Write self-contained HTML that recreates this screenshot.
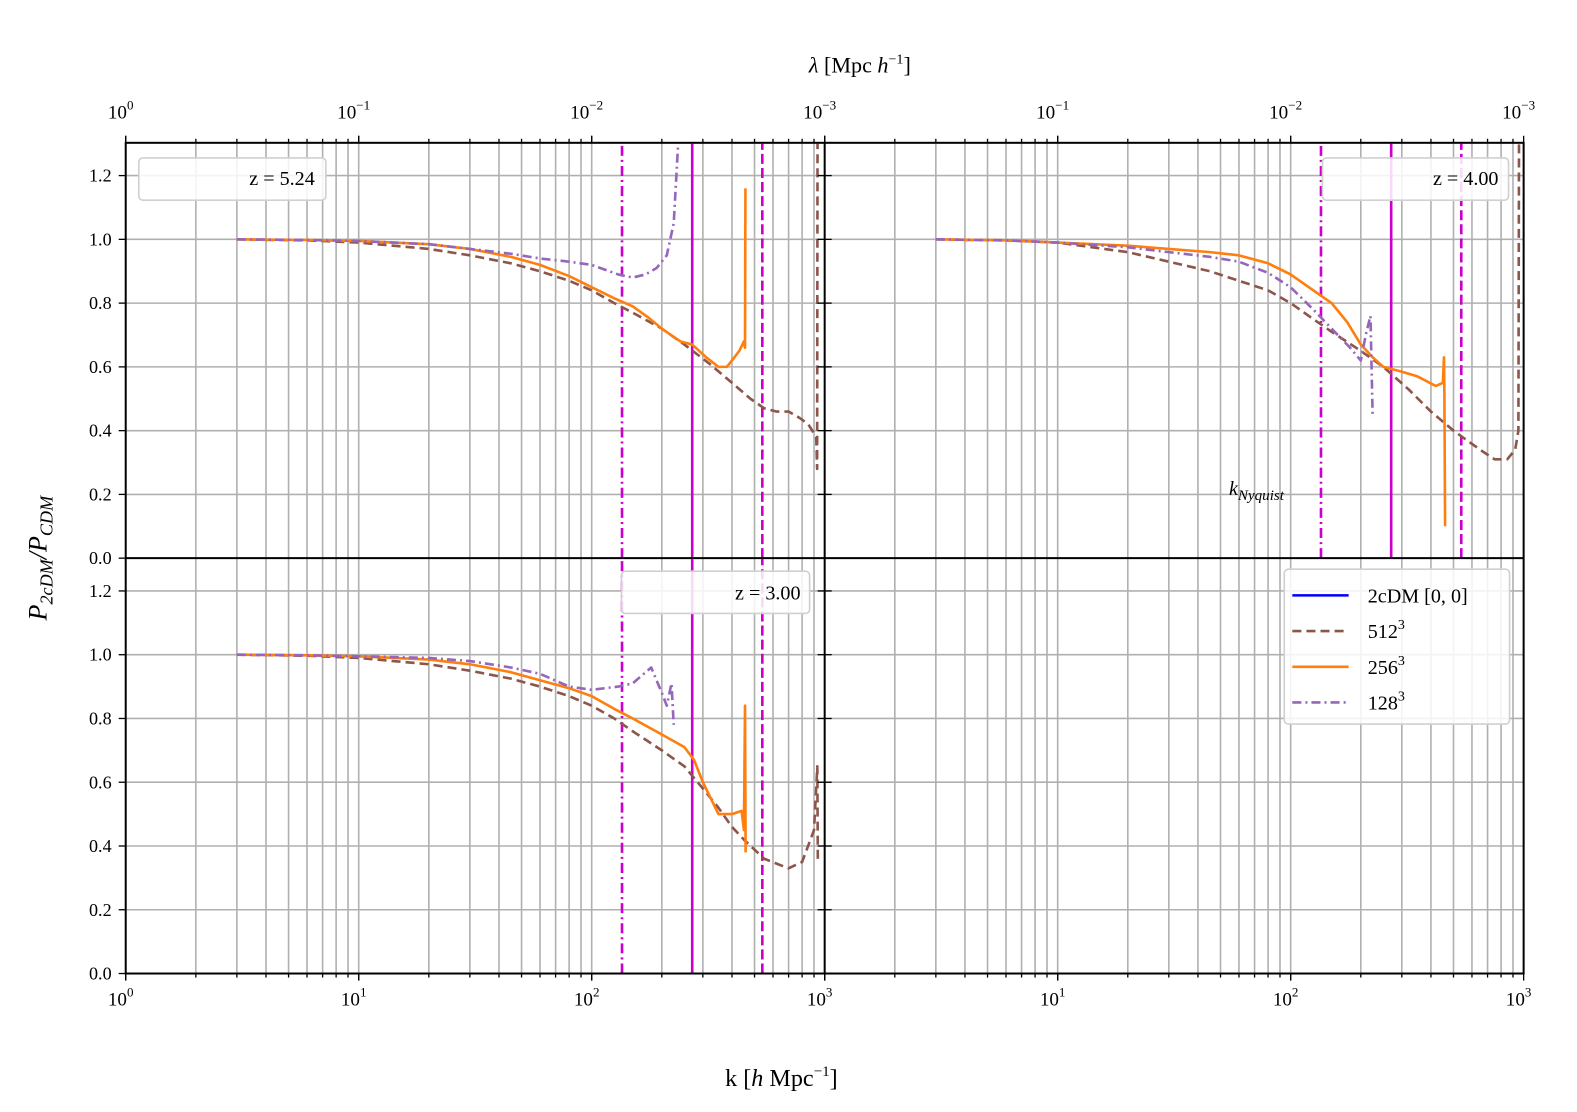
<!DOCTYPE html>
<html><head><meta charset="utf-8"><style>
html,body{margin:0;padding:0;background:#fff;overflow:hidden;width:1577px;height:1112px;}
svg{display:block;}
svg text{font-family:"Liberation Serif",serif;fill:#000;}
</style></head><body>
<svg width="1577" height="1112" xmlns="http://www.w3.org/2000/svg"><g id="s" transform="scale(1.0057)"></g></svg>
<script>
const S=document.getElementById('s');let h='';
const DEC=231.67;
const panels=[{x0:125,y0:142,k:'tl'},{x0:820,y0:142,k:'tr'},{x0:125,y0:555,k:'bl'},{x0:820,y0:555,k:'br'}];
function X(p,k){return p.x0+Math.log10(k)*DEC;}
function Y(p,v){return p.y0+413-v*317;}
panels.forEach(p=>{
 for(let d=0;d<3;d++)for(let m=1;m<10;m++){let x=X(p,m*Math.pow(10,d));if(x<=p.x0+0.5)continue;h+=`<line x1="${x}" y1="${p.y0}" x2="${x}" y2="${p.y0+413}" stroke="#b0b0b0" stroke-width="1.6"/>`;}
 for(let v=0.2;v<1.3;v+=0.2){let y=Y(p,v);h+=`<line x1="${p.x0}" y1="${y}" x2="${p.x0+695}" y2="${y}" stroke="#b0b0b0" stroke-width="1.6"/>`;}
});
function line(p,pts,col,dash,w){let d=pts.map((q,i)=>(i?'L':'M')+X(p,q[0]).toFixed(1)+' '+Y(p,Math.min(q[1],1.3)).toFixed(1)).join(' ');
 h+=`<path d="${d}" fill="none" stroke="${col}" stroke-width="${w||2.6}" stroke-linejoin="round" ${dash?`stroke-dasharray="${dash}"`:''}/>`;}
const BR='#8c564b',OR='#ff7f0e',PU='#9467bd',MG='#cc00cc';
function vlines(p){line(p,[[135,0],[135,1.3]],MG,'10,4,2,4',2.6);line(p,[[270,0],[270,1.3]],MG,null,2.6);line(p,[[540,0],[540,1.3]],MG,'10,4',2.6);}
let P=panels;
vlines(P[0]);vlines(P[1]);vlines(P[2]);
line(P[0],[[3,1],[6,0.997],[10,0.99],[20,0.97],[30,0.95],[45,0.925],[60,0.9],[80,0.87],[100,0.84],[125,0.8],[150,0.77],[200,0.72],[250,0.67],[320,0.61],[400,0.55],[480,0.5],[550,0.47],[620,0.46],[700,0.46],[780,0.44],[850,0.42],[920,0.38],[928,0.28],[932,1.3]],BR,'9,5');
line(P[0],[[3,1],[6,0.998],[10,0.995],[20,0.985],[30,0.97],[45,0.945],[60,0.92],[80,0.885],[100,0.85],[125,0.815],[150,0.79],[175,0.755],[200,0.72],[240,0.68],[270,0.67],[310,0.63],[350,0.6],[380,0.6],[400,0.62],[430,0.65],[450,0.68],[455,0.66],[457,1.16]],OR);
line(P[0],[[3,1],[6,0.998],[10,0.995],[20,0.985],[30,0.97],[45,0.955],[60,0.94],[80,0.93],[100,0.92],[130,0.89],[150,0.88],[170,0.89],[190,0.91],[210,0.95],[225,1.05],[235,1.3]],PU,'9,4,2,4');
line(P[1],[[3,1],[6,0.997],[10,0.99],[20,0.96],[30,0.93],[45,0.9],[60,0.87],[80,0.84],[100,0.8],[125,0.75],[150,0.71],[200,0.65],[250,0.6],[320,0.53],[400,0.46],[500,0.4],[650,0.34],[750,0.31],[850,0.31],[920,0.34],[950,0.4],[955,1.3]],BR,'9,5');
line(P[1],[[3,1],[6,0.997],[10,0.99],[20,0.98],[30,0.97],[45,0.96],[60,0.95],[80,0.925],[100,0.89],[125,0.84],[150,0.8],[175,0.74],[200,0.67],[225,0.63],[250,0.6],[300,0.585],[350,0.57],[420,0.54],[450,0.55],[455,0.63],[457,0.52],[460,0.1]],OR);
line(P[1],[[3,1],[6,0.997],[10,0.99],[20,0.975],[30,0.96],[45,0.945],[60,0.93],[80,0.895],[100,0.85],[125,0.78],[150,0.72],[180,0.66],[200,0.62],[210,0.7],[220,0.76],[225,0.44]],PU,'9,4,2,4');
line(P[2],[[3,1],[6,0.997],[10,0.99],[20,0.97],[30,0.95],[45,0.925],[60,0.9],[80,0.87],[100,0.84],[125,0.8],[150,0.76],[200,0.7],[250,0.65],[300,0.58],[350,0.52],[400,0.46],[450,0.42],[550,0.36],[700,0.33],[800,0.35],[900,0.45],[930,0.65],[935,0.35]],BR,'9,5');
line(P[2],[[3,1],[6,0.998],[10,0.995],[20,0.985],[30,0.97],[45,0.945],[60,0.92],[80,0.895],[100,0.87],[125,0.83],[150,0.8],[200,0.75],[250,0.71],[275,0.67],[300,0.6],[350,0.5],[400,0.5],[440,0.51],[450,0.45],[455,0.84],[458,0.38]],OR);
line(P[2],[[3,1],[6,0.998],[10,0.995],[20,0.99],[30,0.98],[45,0.96],[60,0.94],[80,0.9],[100,0.89],[130,0.9],[150,0.91],[180,0.96],[200,0.88],[210,0.84],[220,0.91],[225,0.78]],PU,'9,4,2,4');
h+=`<rect x="125" y="142" width="1390" height="826" fill="none" stroke="#000" stroke-width="2"/>`;
h+=`<line x1="820" y1="142" x2="820" y2="968" stroke="#000" stroke-width="2"/><line x1="125" y1="555" x2="1515" y2="555" stroke="#000" stroke-width="2"/>`;
[0,1].forEach(c=>{let x0=125+c*695;
 for(let d=0;d<3;d++)for(let m=1;m<10;m++){let x=x0+Math.log10(m*Math.pow(10,d))*DEC;let L=m==1?7:4;
  h+=`<line x1="${x}" y1="968" x2="${x}" y2="${968+L}" stroke="#000" stroke-width="1.3"/><line x1="${x}" y1="142" x2="${x}" y2="${142-L}" stroke="#000" stroke-width="1.3"/>`;}
 for(let d=0;d<=3;d++){let x=x0+d*DEC;
  h+=`<line x1="${x}" y1="968" x2="${x}" y2="975" stroke="#000" stroke-width="1.3"/><line x1="${x}" y1="142" x2="${x}" y2="135" stroke="#000" stroke-width="1.3"/>`;
  if(c==1&&d==0)continue;
  h+=`<text x="${x-5}" y="1000" font-size="19" text-anchor="middle">10<tspan dy="-9" font-size="13">${d}</tspan></text>`;
  h+=`<text x="${x-5}" y="118" font-size="19" text-anchor="middle">10<tspan dy="-9" font-size="13">${d?'−'+d:'0'}</tspan></text>`;}
});
[142,555].forEach(y0=>{for(let i=0;i<=6;i++){let y=y0+413-i*63.4;let v=(i*0.2).toFixed(1);
 h+=`<line x1="118" y1="${y}" x2="125" y2="${y}" stroke="#000" stroke-width="1.3"/><line x1="813" y1="${y}" x2="827" y2="${y}" stroke="#000" stroke-width="1.3"/>`;
 h+=`<text x="111" y="${y+6}" font-size="18" text-anchor="end">${v}</text>`;}});
function box(x,y,w,hh){h+=`<rect x="${x}" y="${y}" width="${w}" height="${hh}" rx="4" fill="#fff" fill-opacity="0.85" stroke="#d0d0d0" stroke-width="1.6"/>`;}
box(138,157,186,42);h+=`<text x="313" y="184" font-size="20" text-anchor="end">z = 5.24</text>`;
box(1315,157,185,42);h+=`<text x="1490" y="184" font-size="20" text-anchor="end">z = 4.00</text>`;
box(618,568,187,42);h+=`<text x="796" y="596" font-size="20" text-anchor="end">z = 3.00</text>`;
box(1277,566,224,154);
const le=[['#0000ff',null,'2cDM [0, 0]'],[BR,'9,5','512'],[OR,null,'256'],[PU,'9,4,2,4','128']];
le.forEach((e,i)=>{let y=592+i*35.5;h+=`<line x1="1285" y1="${y}" x2="1341" y2="${y}" stroke="${e[0]}" stroke-width="2.6" ${e[1]?`stroke-dasharray="${e[1]}"`:''}/>`;
 h+=`<text x="1360" y="${y+7}" font-size="20">${e[2]}${i?'<tspan dy="-9" font-size="14">3</tspan>':''}</text>`;});
h+=`<text x="1222" y="492" font-size="20" font-style="italic">k<tspan dy="5" font-size="15">Nyquist</tspan></text>`;
h+=`<text x="855" y="72" font-size="22" text-anchor="middle"><tspan font-style="italic">λ</tspan> [Mpc <tspan font-style="italic">h</tspan><tspan dy="-9" font-size="14">−1</tspan><tspan dy="9">]</tspan></text>`;
h+=`<text x="777" y="1080" font-size="24" text-anchor="middle">k [<tspan font-style="italic">h</tspan> Mpc<tspan dy="-10" font-size="15">−1</tspan><tspan dy="10">]</tspan></text>`;
h+=`<text transform="translate(46,555) rotate(-90)" font-size="26" text-anchor="middle" font-style="italic">P<tspan dy="6" font-size="18">2cDM</tspan><tspan dy="-6">/P</tspan><tspan dy="6" font-size="18">CDM</tspan></text>`;
S.innerHTML=h;
</script>
</body></html>
